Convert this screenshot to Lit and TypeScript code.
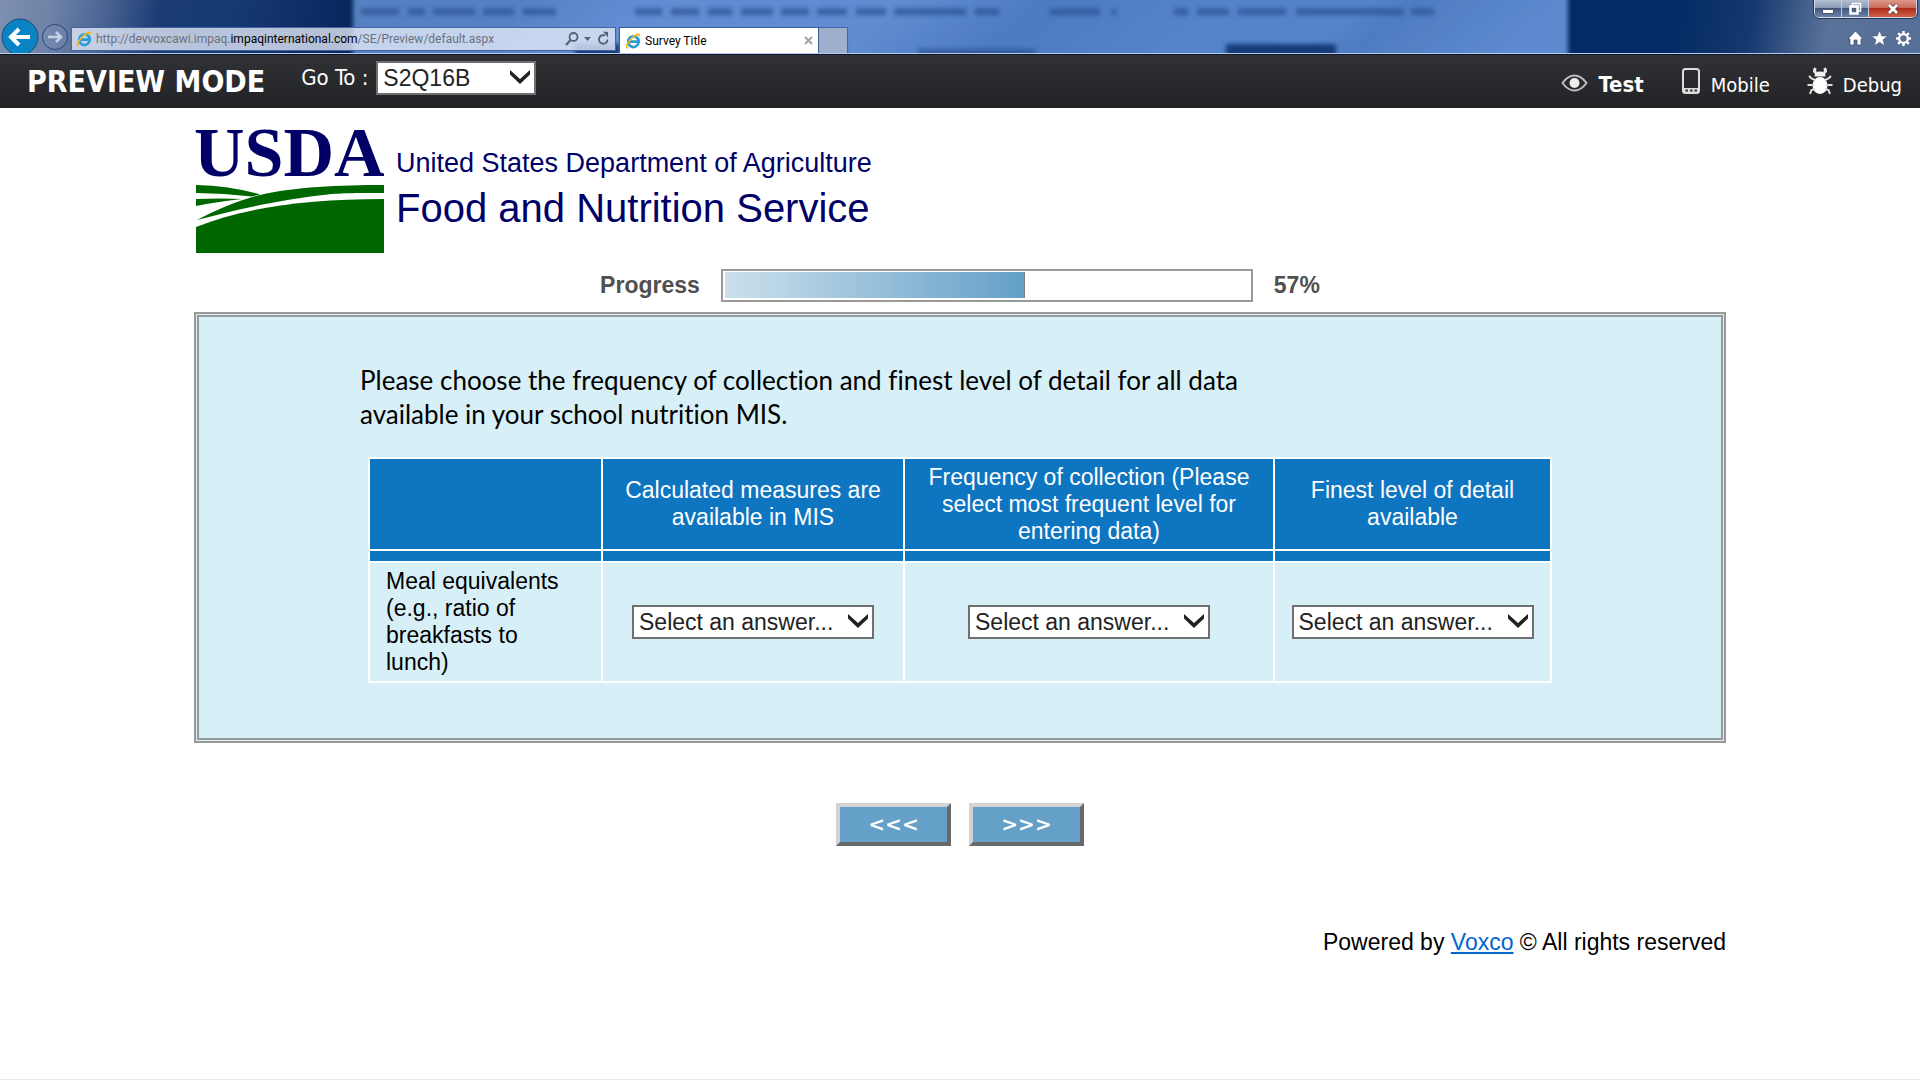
import { LitElement, html, css, svg } from "lit";
import { customElement, property } from "lit/decorators.js";

const ieLogo = html`<svg class="ie" viewBox="0 0 16 16" width="16" height="16" aria-hidden="true">
  <path d="M13.6 10.2A5.3 5.3 0 1 1 13.8 8.6H4.6" fill="none" stroke="#2b9ad8" stroke-width="2.6"/>
  <path d="M5 6.6A3.6 3.6 0 0 1 11.6 6.6" fill="none" stroke="#7fd0f5" stroke-width="1"/>
  <path d="M1.2 15.2C-.6 13 3.4 6.600 8.600 2.700C12 .2 15.200 -.2 15.300 2.300C15.300 3.200 15 4 14.600 4.800C14.900 2.900 14.200 2 12 2.800C7.500 4.600 2.200 11.500 2.400 14.200C2.500 15.100 3.600 15 4.600 14.500C3.400 15.600 1.900 16 1.200 15.200Z" fill="#f5b915"/>
</svg>`;

@customElement("answer-select")
export class AnswerSelect extends LitElement {
  @property() label = "";
  @property({ type: Array }) options: string[] = [];

  static styles = css`
    :host { display: inline-grid; }
    select, svg { grid-area: 1 / 1; }
    select {
      appearance: none;
      width: 100%;
      height: 34px;
      margin: 0;
      padding: 0 32px 0 5px;
      border: 2px solid #707070;
      border-radius: 0;
      background: #fff;
      color: #222;
      font: 23px "Liberation Sans", Arial, sans-serif;
    }
    svg {
      align-self: center;
      justify-self: end;
      margin: 0 6px 2px 0;
      pointer-events: none;
    }
  `;

  render() {
    return html`
      <select aria-label=${this.label}>
        ${this.options.map((o) => html`<option>${o}</option>`)}
      </select>
      <svg viewBox="0 0 20 14" width="20" height="14" aria-hidden="true">
        <path d="M0 0L10 9L20 0V4.500L10 14L0 4.500Z" fill="#222"/>
      </svg>
    `;
  }
}

@customElement("browser-frame")
export class BrowserFrame extends LitElement {
  static styles = css`
    :host { display: block; font: 12px/14px Roboto, "Noto Sans", sans-serif; color: #000; }
    .chrome {
      position: relative;
      overflow: hidden;
      height: 53px;
      border-bottom: 1px solid #b5cbf2;
      background: linear-gradient(100deg, #7d90b0 0, #6f84a8 50px, #4a6494 105px, #1a3b73 160px, #173972 230px, #08265c 350px, #042b64 400px, #042b64 87%, #15396f 91%, #5a7299 95%, #566f98 100%);
    }
    .backdrop { position: absolute; inset: 0; width: 100%; height: 100%; }
    .bar {
      position: relative;
      display: flex;
      align-items: flex-end;
      height: 100%;
    }
    button { border: 0; margin: 0; padding: 0; background: none; color: inherit; font: inherit; display: block; }
    button svg { display: block; }
    .nav { display: flex; align-items: flex-end; width: 71px; height: 53px; flex: none; }
    .address {
      display: flex;
      align-items: center;
      box-sizing: border-box;
      width: 545px;
      height: 24px;
      margin-bottom: 2px;
      padding: 0 4px;
      gap: 4px;
      border: 1px solid #4465a0;
      background: rgba(229, 236, 248, 0.78);
    }
    .url { flex: 1; color: #6b727e; outline: none; white-space: nowrap; }
    .url b { font-weight: 400; color: #000; }
    .tabs { display: flex; align-items: flex-end; margin-left: 3px; }
    .tab {
      display: flex;
      align-items: center;
      box-sizing: border-box;
      width: 200px;
      height: 26px;
      padding: 0 5px;
      gap: 4px;
      border: 1px solid #3c5c96;
      border-bottom: 0;
      background: #fff;
    }
    .tab .name { flex: 1; text-align: left; }
    .new-tab {
      width: 29px;
      height: 26px;
      border: 1px solid #4465a0;
      border-bottom: 0;
      border-left: 0;
      background: #9dafcb;
    }
    .right { display: flex; flex-direction: column; align-items: flex-end; justify-content: space-between; align-self: stretch; margin-left: auto; padding: 0 3px 6px 0; }
    .window {
      display: flex;
      height: 17px;
      border: 1px solid #d2dae6;
      border-top: 0;
      border-radius: 0 0 5px 5px;
      overflow: hidden;
      outline: 1px solid #26385a;
    }
    .window button { width: 27px; height: 17px; border-right: 1px solid #c6d0e0; background: linear-gradient(#b3bfd2, #8b9cb8 45%, #41577f 50%, #6c83a9); }
    .window .close { width: 47px; border: 0; background: linear-gradient(#dd9a8e, #cb6a59 45%, #b02d1b 50%, #d0634b); }
    .window svg { margin: auto; }
    .tools { display: flex; gap: 5px; padding-right: 4px; }
  `;

  render() {
    return html`
      <header class="chrome">
        <svg class="backdrop" preserveAspectRatio="none" viewBox="0 0 1920 54" aria-hidden="true">
          <defs>
            <linearGradient id="pane" x1="0" x2="1" y1="0" y2=".08">
              <stop offset="0" stop-color="#5781c2"/><stop offset=".14" stop-color="#5480c3"/>
              <stop offset=".25" stop-color="#628dd2"/><stop offset=".46" stop-color="#618cd0"/>
              <stop offset=".58" stop-color="#4d7bc1"/><stop offset=".72" stop-color="#5483c9"/>
              <stop offset=".84" stop-color="#5584ca"/><stop offset=".88" stop-color="#4f7cc0"/>
              <stop offset="1" stop-color="#5d8ace"/>
            </linearGradient>
            <filter id="soft" filterUnits="userSpaceOnUse" x="0" y="-20" width="1920" height="100"><feGaussianBlur stdDeviation="2"/></filter>
          </defs>
          <rect x="353" y="-10" width="1215" height="80" fill="url(#pane)" filter="url(#soft)"/>
          <g filter="url(#soft)" fill="none" stroke="#2d5596" stroke-width="7" opacity=".75">
            <path d="M361 12H556" stroke-dasharray="38 9 17 8 42 8 31 9 36 20"/>
            <path d="M635 12H999" stroke-dasharray="27 9 28 9 24 9 32 8 28 8 30 9 30 8 72 9 36 20"/>
            <path d="M1050 12H1116" stroke-dasharray="50 12 4 20"/>
            <path d="M1174 12H1434" stroke-dasharray="14 9 32 9 48 10 108 7 30 20"/>
          </g>
          <g filter="url(#soft)" fill="#143a78">
            <rect x="575" y="45" width="45" height="12"/><rect x="826" y="45" width="20" height="10" opacity=".6"/>
            <rect x="918" y="50" width="118" height="7" opacity=".5"/><rect x="1226" y="45" width="110" height="14"/>
          </g>
        </svg>
        <div class="bar">
          <nav class="nav">
            <button aria-label="Back"><svg width="40" height="35" viewBox="0 0 40 35">
              <circle cx="20" cy="19" r="18" fill="#0a83c4" stroke="#27486f" stroke-width="1"/>
              <path d="M30 19H12M19 11L11 19L19 27" fill="none" stroke="#fff" stroke-width="4"/>
            </svg></button>
            <button aria-label="Forward"><svg width="30" height="30" viewBox="0 0 30 30">
              <circle cx="15" cy="14" r="12.500" fill="#8296b8" fill-opacity=".35" stroke="#2c4675" stroke-width="1"/>
              <path d="M8 14H21M16 9L21 14L16 19" fill="none" stroke="#c5d0e2" stroke-width="2.500"/>
            </svg></button>
          </nav>
          <div class="address">
            ${ieLogo}
            <div class="url" role="textbox" contenteditable="true" aria-label="Address">http://devvoxcawi.impaq.<b>impaqinternational.com</b>/SE/Preview/default.aspx</div>
            <button aria-label="Search"><svg width="26" height="16" viewBox="0 0 26 16">
              <circle cx="8.500" cy="6" r="4" fill="none" stroke="#59616f" stroke-width="1.800"/>
              <path d="M5.500 9L1 14" stroke="#59616f" stroke-width="2.200"/><path d="M19 6H26L22.500 10Z" fill="#59616f"/>
            </svg></button>
            <button aria-label="Refresh"><svg width="16" height="16" viewBox="0 0 16 16">
              <path d="M12.500 8.500A4.300 4.300 0 1 1 8.500 4.200H10" fill="none" stroke="#59616f" stroke-width="1.900"/>
              <path d="M8 0.500L13 1V6.500Z" fill="#59616f"/>
            </svg></button>
          </div>
          <div class="tabs" role="tablist">
            <button class="tab" role="tab" aria-selected="true">
              ${ieLogo}<span class="name">Survey Title</span>
              <svg width="9" height="9" viewBox="0 0 9 9"><path d="M1 1L8 8M8 1L1 8" stroke="#a3a3a3" stroke-width="2"/></svg>
            </button>
            <button class="new-tab" aria-label="New tab"></button>
          </div>
          <div class="right">
            <div class="window">
              <button aria-label="Minimize"><svg width="14" height="14" viewBox="0 0 14 14"><rect x="1.500" y="7.500" width="11" height="4" fill="#fff" stroke="#4c5870"/></svg></button>
              <button aria-label="Restore"><svg width="14" height="14" viewBox="0 0 14 14">
                <path d="M4.500 4V1.500H12.500V9H10" fill="none" stroke="#fff" stroke-width="1.500"/>
                <rect x="2.500" y="4.500" width="7" height="7" fill="none" stroke="#fff" stroke-width="2.500"/></svg></button>
              <button class="close" aria-label="Close"><svg width="14" height="14" viewBox="0 0 14 14">
                <path d="M3 3L11 11M11 3L3 11" stroke="#5b3a3f" stroke-width="4.500"/><path d="M3 3L11 11M11 3L3 11" stroke="#fff" stroke-width="2.800"/></svg></button>
            </div>
            <div class="tools">
              <button aria-label="Home"><svg width="19" height="17" viewBox="0 0 19 17"><path d="M9.500 1L17 9H15V15H11V10H8V15H4V9H2L9.500 1Z" fill="#fff" stroke="#35496f" stroke-width=".7"/></svg></button>
              <button aria-label="Favorites"><svg width="19" height="17" viewBox="0 0 19 17"><path d="M9.500 0.500L11.800 6H17.500L13 9.800L14.700 15.800L9.500 12.300L4.300 15.800L6 9.800L1.500 6H7.200Z" fill="#fff" stroke="#35496f" stroke-width=".5"/></svg></button>
              <button aria-label="Tools"><svg width="19" height="17" viewBox="0 0 19 17">
                <circle cx="9.500" cy="8.500" r="4.300" fill="none" stroke="#fff" stroke-width="2.200"/>
                ${[0, 45, 90, 135, 180, 225, 270, 315].map((a) => svg`<rect x="8.300" y="1" width="2.400" height="3" fill="#fff" transform="rotate(${a} 9.500 8.500)"/>`)}
              </svg></button>
            </div>
          </div>
        </div>
      </header>
    `;
  }
}

@customElement("app-root")
export class AppRoot extends LitElement {
  progress = 57;
  columns = [
    "Calculated measures are available in MIS",
    "Frequency of collection (Please select most frequent level for entering data)",
    "Finest level of detail available",
  ];

  static styles = css`
    :host {
      display: flex;
      flex-direction: column;
      box-sizing: border-box;
      min-height: 100vh;
      background: #fff;
      border-bottom: 1px solid #e9e9e9;
      font: 23px/27px "Liberation Sans", Arial, sans-serif;
      color: #000;
    }
    .toolbar {
      display: flex;
      align-items: center;
      box-sizing: border-box;
      height: 54px;
      padding: 0 18px 0 27px;
      border-top: 1px solid #0f1626;
      background: linear-gradient(#313235, #212225);
      color: #fff;
      font: 20px/24px "DejaVu Sans Condensed", "DejaVu Sans", sans-serif;
    }
    h1 { margin: 0 36px 0 0; font-size: 30px; line-height: 54px; font-weight: 700; }
    .goto { display: flex; align-items: center; gap: 8px; padding-bottom: 8px; font-size: 22px; }
    .goto answer-select { width: 160px; }
    .modes { display: flex; gap: 37px; margin-left: auto; }
    .modes a { display: flex; align-items: flex-end; gap: 10px; color: #fff; text-decoration: none; }
    .modes .active { font-weight: 700; font-size: 22px; }
    .modes svg { display: block; margin-bottom: 2px; }
    .modes .active svg { margin-bottom: 5px; }
    .page { padding: 12px 194px 0; }
    .brand { display: flex; align-items: flex-start; gap: 12px; height: 134px; color: #000066; }
    .mark { display: flex; flex-direction: column; width: 190px; }
    .usda { font: 700 70px/65px "Liberation Serif", "Times New Roman", serif; }
    .mark svg { display: block; }
    .agency { padding-top: 30px; }
    .agency div { font-size: 27px; line-height: 27px; }
    .agency .service { font-size: 40px; line-height: 56px; padding-top: 3px; }
    .progress {
      display: flex;
      align-items: center;
      justify-content: center;
      gap: 21px;
      padding: 15px 0 10px;
      color: #4f4f4f;
      font-weight: 700;
    }
    .track {
      box-sizing: border-box;
      width: 532px;
      height: 33px;
      padding: 1px 0 2px 2px;
      border: 2px solid #999;
    }
    .fill {
      box-sizing: border-box;
      height: 26px;
      border-right: 1px solid #808080;
      background: linear-gradient(90deg, #cce0ec, #64a0c8);
    }
    .panel {
      padding: 46px 161px 55px;
      border: 5px double #999;
      background: #d7eff7;
    }
    .question {
      max-width: 900px;
      margin: 0 0 26px;
      font: 26px/34px Lato, Carlito, sans-serif;
      font-variant-ligatures: none;
    }
    table {
      width: calc(100% - 16px);
      margin: 0 8px;
      table-layout: fixed;
      border-collapse: collapse;
    }
    th, td { border: 2px solid #fff; padding: 0 16px; }
    th { font-weight: 400; }
    thead th, thead td { background: #0e75c1; color: #fff; }
    thead .titles > * { height: 90px; }
    thead .rule td { height: 10px; line-height: 10px; }
    tbody th { height: 118px; text-align: left; }
    tbody td { text-align: center; padding: 0; }
    tbody answer-select { width: 242px; vertical-align: middle; }
    .c0 { width: 233px; }
    .c1 { width: 302px; }
    .c2 { width: 370px; }
    .pager { display: flex; justify-content: center; gap: 18px; margin-top: 60px; }
    .pager button {
      box-sizing: border-box;
      width: 115px;
      height: 43px;
      padding: 0;
      border: 4px solid;
      border-color: #d3d3d3 #696969 #696969 #d3d3d3;
      background: #64a0c8;
      color: #fff;
      font: 700 20px/27px "DejaVu Sans", Verdana, sans-serif;
    }
    .credit { margin: 83px 0 0; text-align: right; }
    .credit a { color: #0066cc; }
  `;

  render() {
    return html`
      <browser-frame></browser-frame>
      <div class="toolbar">
        <h1>PREVIEW MODE</h1>
        <div class="goto">
          <span>Go To :</span>
          <answer-select label="Go To" .options=${["S2Q16B"]}></answer-select>
        </div>
        <nav class="modes">
          <a class="active" href="#test">
            <svg width="27" height="18" viewBox="0 0 27 18" aria-hidden="true">
              <path d="M1.500 9Q7 1.500 13.500 1.500T25.500 9Q20 16.500 13.500 16.500T1.500 9Z" fill="none" stroke="#bdbdbd" stroke-width="2"/>
              <circle cx="13.500" cy="9" r="5" fill="#eee"/>
            </svg>Test</a>
          <a href="#mobile">
            <svg width="20" height="28" viewBox="0 0 20 28" aria-hidden="true">
              <rect x="2" y="2" width="16" height="24" rx="2.500" fill="none" stroke="#ddd" stroke-width="2"/>
              <path d="M2 21H18V26H2Z" fill="#ddd"/><path d="M4.500 23.500H7M9 23.500H11.500M13.500 23.500H16" stroke="#333" stroke-width="2"/>
            </svg>Mobile</a>
          <a href="#debug">
            <svg width="26" height="28" viewBox="0 0 26 28" aria-hidden="true">
              <path d="M8.500 1Q6 5 9.500 6M17.500 1Q20 5 16.500 6" fill="none" stroke="#e8e8e8" stroke-width="3"/>
              <path d="M7.500 9.500Q7.500 4.500 13 4.500T18.500 9.500Z" fill="#f2f2f2"/>
              <ellipse cx="13" cy="18.500" rx="7.500" ry="8.500" fill="#fff"/>
              <path d="M8 13L4.500 11.500L2 9M18 13L21.500 11.500L24 9M7.500 18H0.500M18.500 18H25.500M8 22L4.500 23L3 27M18 22L21.500 23L23 27" fill="none" stroke="#ddd" stroke-width="2"/>
            </svg>Debug</a>
        </nav>
      </div>
      <main class="page">
        <div class="brand">
          <div class="mark">
            <span class="usda">USDA</span>
            <svg width="190" height="68" viewBox="0 0 190 68" aria-hidden="true">
              <g fill="#006600">
                <path d="M2 0Q38 1 66 9.500L58 11.500Q30 8 2 8Z"/>
                <path d="M2 14Q26 13 48 14Q22 17 2 21Z"/>
                <path d="M3 35C22 25 44 15 66 10C100 2 145 0 190 0V8C160 8 145 8 129 10C100 13 50 22 3 35Z"/>
                <path d="M2 42C50 23 110 14 190 14V68H2Z"/>
              </g>
            </svg>
          </div>
          <div class="agency">
            <div>United States Department of Agriculture</div>
            <div class="service">Food and Nutrition Service</div>
          </div>
        </div>
        <div class="progress">
          <span id="progress-label">Progress</span>
          <div class="track" role="progressbar" aria-labelledby="progress-label" aria-valuenow=${this.progress}>
            <div class="fill" style="width:${this.progress}%"></div>
          </div>
          <span>${this.progress}%</span>
        </div>
        <section class="panel">
          <p class="question">Please choose the frequency of collection and finest level of detail for all data available in your school nutrition MIS.</p>
          <table>
            <colgroup><col class="c0"><col class="c1"><col class="c2"><col></colgroup>
            <thead>
              <tr class="titles"><td></td>${this.columns.map((c) => html`<th scope="col">${c}</th>`)}</tr>
              <tr class="rule"><td></td><td></td><td></td><td></td></tr>
            </thead>
            <tbody>
              <tr>
                <th scope="row">Meal equivalents (e.g., ratio of breakfasts to lunch)</th>
                ${this.columns.map((c) => html`<td><answer-select label=${c} .options=${["Select an answer..."]}></answer-select></td>`)}
              </tr>
            </tbody>
          </table>
        </section>
        <div class="pager">
          <button aria-label="Previous">&lt;&lt;&lt;</button>
          <button aria-label="Next">&gt;&gt;&gt;</button>
        </div>
        <p class="credit">Powered by <a href="#voxco">Voxco</a> © All rights reserved</p>
      </main>
    `;
  }
}
